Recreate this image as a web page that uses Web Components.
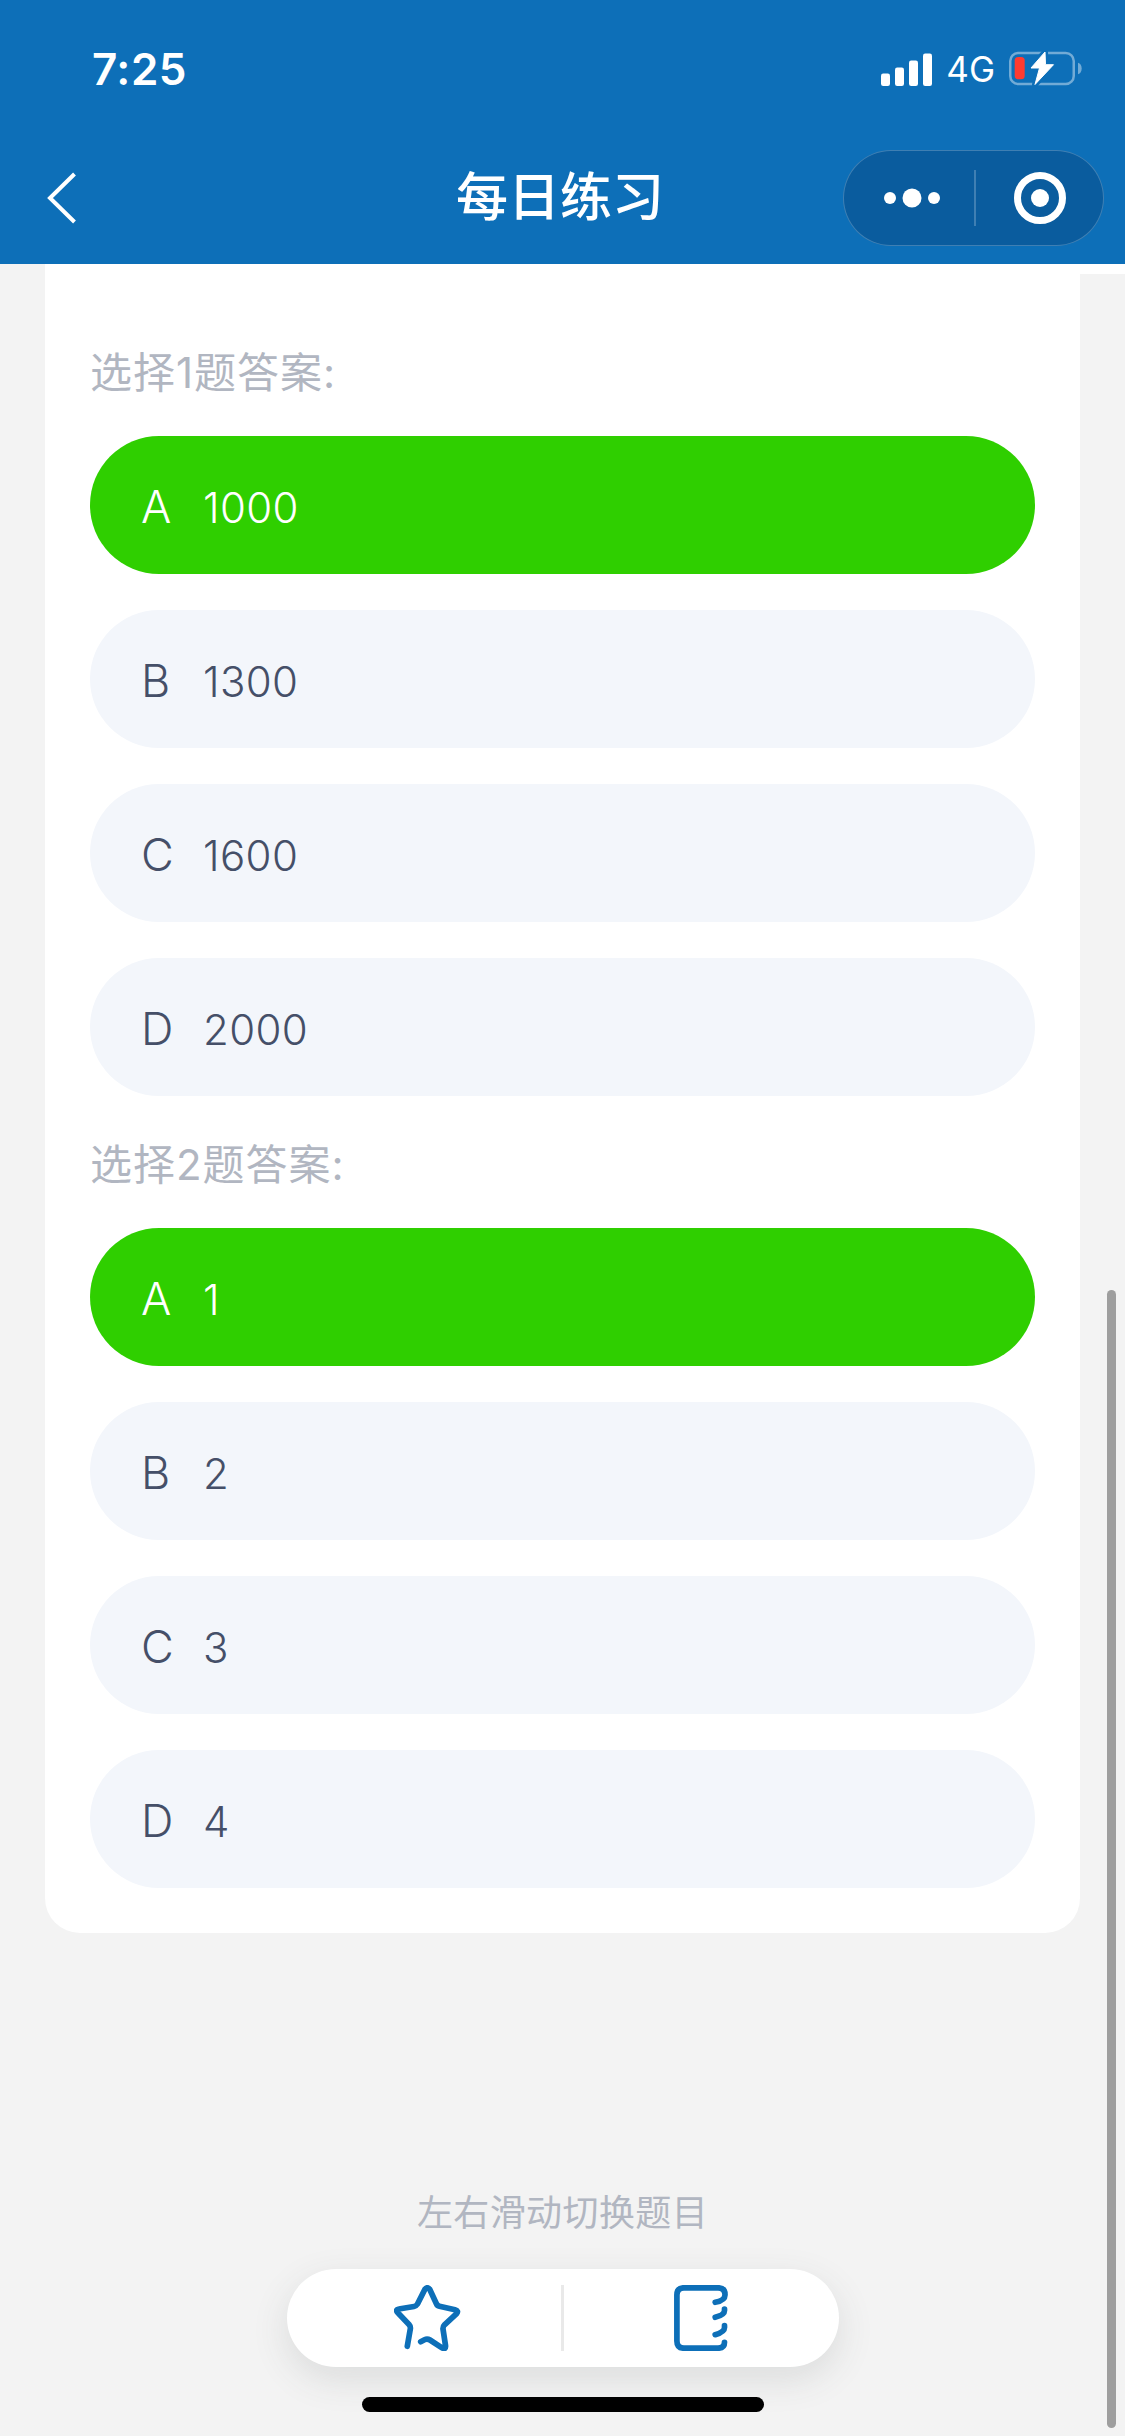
<!DOCTYPE html>
<html lang="zh">
<head>
<meta charset="utf-8">
<title>每日练习</title>
<style>
  html, body { margin: 0; padding: 0; background: #f3f3f3; }
  body { font-family: Inter, "Noto Sans CJK SC", sans-serif; }
</style>
</head>
<body>
<app-shell>
  <top-header slot="header" title="每日练习" time="7:25"></top-header>
  <quiz-card>
    <answer-group title="选择1题答案:">
      <option-pill letter="A" selected>1000</option-pill>
      <option-pill letter="B">1300</option-pill>
      <option-pill letter="C">1600</option-pill>
      <option-pill letter="D">2000</option-pill>
    </answer-group>
    <answer-group title="选择2题答案:">
      <option-pill letter="A" selected>1</option-pill>
      <option-pill letter="B">2</option-pill>
      <option-pill letter="C">3</option-pill>
      <option-pill letter="D">4</option-pill>
    </answer-group>
  </quiz-card>
  <bottom-tools slot="footer" hint="左右滑动切换题目"></bottom-tools>
</app-shell>

<script>
const shellTemplate = document.createElement('template');
shellTemplate.innerHTML = `
  <style>
    :host {
      display: flex;
      flex-direction: column;
      position: relative;
      width: 1125px;
      height: 2436px;
      overflow: hidden;
      background: #f3f3f3;
    }

    .content {
      flex: 1;
      min-height: 0;
    }

    .strip {
      height: 10px;
      margin-left: 45px;
      background: #fff;
    }

    .scrollbar {
      position: absolute;
      left: 1107px;
      top: 1290px;
      width: 9px;
      height: 1138px;
      border-radius: 5px;
      background: #9e9e9e;
    }
  </style>
  <slot name="header"></slot>
  <div class="content">
    <div class="strip"></div>
    <slot></slot>
  </div>
  <slot name="footer"></slot>
  <div class="scrollbar"></div>
`;

class AppShell extends HTMLElement {
  constructor() {
    super();
    this.attachShadow({ mode: 'open' });
    this.shadowRoot.appendChild(shellTemplate.content.cloneNode(true));
  }
}

const headerTemplate = document.createElement('template');
headerTemplate.innerHTML = `
  <style>
    :host {
      display: block;
      height: 264px;
      background: #0d6fb8;
      color: #fff;
      font-family: Inter, "Noto Sans CJK SC", sans-serif;
    }

    .status {
      display: flex;
      align-items: center;
      justify-content: space-between;
      height: 138px;
      margin-bottom: 12px;
      padding: 0 43px 0 92px;
      box-sizing: border-box;
    }

    #time {
      font-size: 44px;
      font-weight: 600;
      letter-spacing: 0.5px;
    }

    .indicators {
      display: flex;
      align-items: center;
    }

    .net {
      margin: 0 14px 0 14px;
      font-size: 35px;
      font-weight: 400;
      line-height: 36px;
    }

    svg { display: block; }

    .nav {
      display: grid;
      grid-template-columns: 261px 1fr 261px;
      align-items: center;
      height: 96px;
      padding: 0 21px 0 16px;
    }

    .back { margin-left: 31px; }

    #title {
      justify-self: center;
      font-size: 52px;
      font-weight: 500;
      line-height: 60px;
    }

    .capsule {
      display: flex;
      align-items: center;
      box-sizing: border-box;
      width: 261px;
      height: 96px;
      border: 1.5px solid rgba(255, 255, 255, 0.22);
      border-radius: 48px;
      background: #0a5c9e;
    }

    .capsule > div {
      display: flex;
      align-items: center;
      justify-content: center;
    }

    .more { box-sizing: border-box; width: 130px; padding-left: 5px; }
    .sep { width: 1.5px; height: 56px; background: rgba(255, 255, 255, 0.22); }
    .target { flex: 1; padding-left: 2px; }
  </style>
  <div class="status">
    <span id="time"></span>
    <div class="indicators">
      <svg width="51" height="33" viewBox="0 0 51 33" fill="#fff">
        <rect x="0" y="20.5" width="9" height="12.5" rx="2.2"/>
        <rect x="14" y="14.5" width="9" height="18.5" rx="2.2"/>
        <rect x="28" y="7.5" width="9" height="25.5" rx="2.2"/>
        <rect x="42" y="0.5" width="9" height="32.5" rx="2.2"/>
      </svg>
      <span class="net">4G</span>
      <svg width="73" height="36" viewBox="0 0 73 36">
        <rect x="1.25" y="2" width="63.5" height="31" rx="8" fill="none" stroke="#fff" stroke-opacity="0.42" stroke-width="2.5"/>
        <path d="M69 11.7c2.4.6 3.7 3 3.7 5.8s-1.3 5.2-3.7 5.8z" fill="#fff" fill-opacity="0.42"/>
        <rect x="5.7" y="6" width="10" height="22.3" rx="3.6" fill="#ff3b30"/>
        <path d="M36 1 22 17H30.5L26 33.5 44.5 13.7H36.5Z" fill="#0d6fb8" stroke="#0d6fb8" stroke-width="6" stroke-linejoin="round"/>
        <path d="M36 1 22 17H30.5L26 33.5 44.5 13.7H36.5Z" fill="#fff" stroke="#fff" stroke-width="1" stroke-linejoin="round"/>
      </svg>
    </div>
  </div>
  <div class="nav">
    <svg class="back" width="30" height="52" viewBox="0 0 30 52" fill="none" stroke="#fff" stroke-width="4">
      <path d="M27.5 2 3 26l24.5 24"/>
    </svg>
    <span id="title"></span>
    <div class="capsule">
      <div class="more">
        <svg width="68" height="20" viewBox="0 0 68 20" fill="#fff">
          <circle cx="12" cy="10" r="6"/>
          <circle cx="34" cy="10" r="9.5"/>
          <circle cx="56" cy="10" r="6"/>
        </svg>
      </div>
      <div class="sep"></div>
      <div class="target">
        <svg width="52" height="52" viewBox="0 0 52 52">
          <circle cx="26" cy="26" r="22.5" fill="none" stroke="#fff" stroke-width="7"/>
          <circle cx="26" cy="26" r="9" fill="#fff"/>
        </svg>
      </div>
    </div>
  </div>
`;

class TopHeader extends HTMLElement {
  static get observedAttributes() {
    return ['title', 'time'];
  }

  constructor() {
    super();
    this.attachShadow({ mode: 'open' });
    this.shadowRoot.appendChild(headerTemplate.content.cloneNode(true));
  }

  connectedCallback() {
    this.render();
  }

  attributeChangedCallback() {
    this.render();
  }

  render() {
    this.shadowRoot.getElementById('title').textContent = this.getAttribute('title') || '';
    this.shadowRoot.getElementById('time').textContent = this.getAttribute('time') || '';
  }
}

const cardTemplate = document.createElement('template');
cardTemplate.innerHTML = `
  <style>
    :host {
      display: block;
      margin: -10px 45px 0;
      padding: 40px 45px 45px;
      background: #fff;
      border-radius: 0 0 35px 35px;
    }
  </style>
  <slot></slot>
`;

class QuizCard extends HTMLElement {
  constructor() {
    super();
    this.attachShadow({ mode: 'open' });
    this.shadowRoot.appendChild(cardTemplate.content.cloneNode(true));
  }
}

const groupTemplate = document.createElement('template');
groupTemplate.innerHTML = `
  <style>
    :host {
      display: block;
    }

    #title {
      box-sizing: border-box;
      height: 132px;
      padding-top: 39px;
      color: #b1b6c1;
      font-family: Inter, "Noto Sans CJK SC", sans-serif;
      font-size: 42px;
      letter-spacing: 1px;
      line-height: 60px;
    }

    .list {
      display: flex;
      flex-direction: column;
      gap: 36px;
    }
  </style>
  <div id="title"></div>
  <div class="list"><slot></slot></div>
`;

class AnswerGroup extends HTMLElement {
  static get observedAttributes() {
    return ['title'];
  }

  constructor() {
    super();
    this.attachShadow({ mode: 'open' });
    this.shadowRoot.appendChild(groupTemplate.content.cloneNode(true));
  }

  connectedCallback() {
    this.render();
  }

  attributeChangedCallback() {
    this.render();
  }

  render() {
    this.shadowRoot.getElementById('title').textContent = this.getAttribute('title') || '';
  }
}

const pillTemplate = document.createElement('template');
pillTemplate.innerHTML = `
  <style>
    :host {
      display: flex;
      align-items: baseline;
      box-sizing: border-box;
      height: 138px;
      padding-left: 51px;
      border-radius: 69px;
      background: #f3f6fb;
      color: #454f68;
      font-family: Inter, "Noto Sans CJK SC", sans-serif;
      line-height: 141px;
    }

    :host([selected]) {
      background: #2fcf00;
      color: #fff;
    }

    #letter {
      width: 62px;
      font-size: 45px;
      font-weight: 350;
    }

    .value {
      font-size: 42px;
      font-weight: 350;
      letter-spacing: 0.4px;
    }
  </style>
  <span id="letter"></span>
  <span class="value"><slot></slot></span>
`;

class OptionPill extends HTMLElement {
  static get observedAttributes() {
    return ['letter'];
  }

  constructor() {
    super();
    this.attachShadow({ mode: 'open' });
    this.shadowRoot.appendChild(pillTemplate.content.cloneNode(true));
  }

  connectedCallback() {
    this.render();
  }

  attributeChangedCallback() {
    this.render();
  }

  render() {
    this.shadowRoot.getElementById('letter').textContent = this.getAttribute('letter') || '';
  }
}

const toolsTemplate = document.createElement('template');
toolsTemplate.innerHTML = `
  <style>
    :host {
      display: flex;
      flex-direction: column;
      align-items: center;
      font-family: Inter, "Noto Sans CJK SC", sans-serif;
    }

    #hint {
      height: 60px;
      margin-bottom: 26px;
      color: #b1b6c1;
      font-size: 36px;
      letter-spacing: 0.4px;
      line-height: 60px;
    }

    .bar {
      display: grid;
      grid-template-columns: 1fr 3px 1fr;
      align-items: center;
      width: 552px;
      height: 98px;
      border-radius: 49px;
      background: #fff;
      box-shadow: 0 12px 36px rgba(60, 70, 70, 0.13);
    }

    .bar > svg { justify-self: center; }
    .bar > .star { margin-left: 8px; }

    .line {
      height: 66px;
      background: #e9e9e9;
    }

    .home {
      width: 402px;
      height: 15px;
      margin: 30px 0 24px;
      border-radius: 8px;
      background: #000;
    }
  </style>
  <div id="hint"></div>
  <div class="bar">
    <svg class="star" width="67" height="66" viewBox="0 0 67 66" fill="none" stroke="#0d6fb8" stroke-width="5.7" stroke-linecap="round" stroke-linejoin="round">
      <path d="M13.3 61.3 16.3 44Q16.8 41.5 15 39.5L3.6 27.5Q1 24.5 4.8 24L20 21.5Q22 21.2 23.5 19L30.8 4.5Q33.3 1 35.8 4.5L42.3 18.5Q43.3 20.8 45.5 21.3L61 24.8Q65 25.8 62.6 28.6L50.5 39.8Q48.8 41.5 49 44L51.5 60.5Q52 65 48 62.8L36 55Q33.3 53.3 30.5 54.7L26.7 56.7"/>
    </svg>
    <div class="line"></div>
    <svg width="55" height="66" viewBox="0 0 55 66" fill="none" stroke="#0d6fb8" stroke-width="5.7" stroke-linecap="round" stroke-linejoin="round">
      <path d="M41.2 17.3Q51 15.5 51 10V9.5Q51 2.8 44 2.8H10Q2.9 2.8 2.9 10V56Q2.9 63.2 10 63.2H44Q50.5 63.2 50.5 57.3"/>
      <path d="M50.5 24V25.5Q50.5 30 41.2 32.3"/>
      <path d="M50.5 40.7V42.5Q50.5 47 41.2 49.7"/>
    </svg>
  </div>
  <div class="home"></div>
`;

class BottomTools extends HTMLElement {
  static get observedAttributes() {
    return ['hint'];
  }

  constructor() {
    super();
    this.attachShadow({ mode: 'open' });
    this.shadowRoot.appendChild(toolsTemplate.content.cloneNode(true));
  }

  connectedCallback() {
    this.render();
  }

  attributeChangedCallback() {
    this.render();
  }

  render() {
    this.shadowRoot.getElementById('hint').textContent = this.getAttribute('hint') || '';
  }
}

customElements.define('app-shell', AppShell);
customElements.define('top-header', TopHeader);
customElements.define('quiz-card', QuizCard);
customElements.define('answer-group', AnswerGroup);
customElements.define('option-pill', OptionPill);
customElements.define('bottom-tools', BottomTools);
</script>
</body>
</html>
